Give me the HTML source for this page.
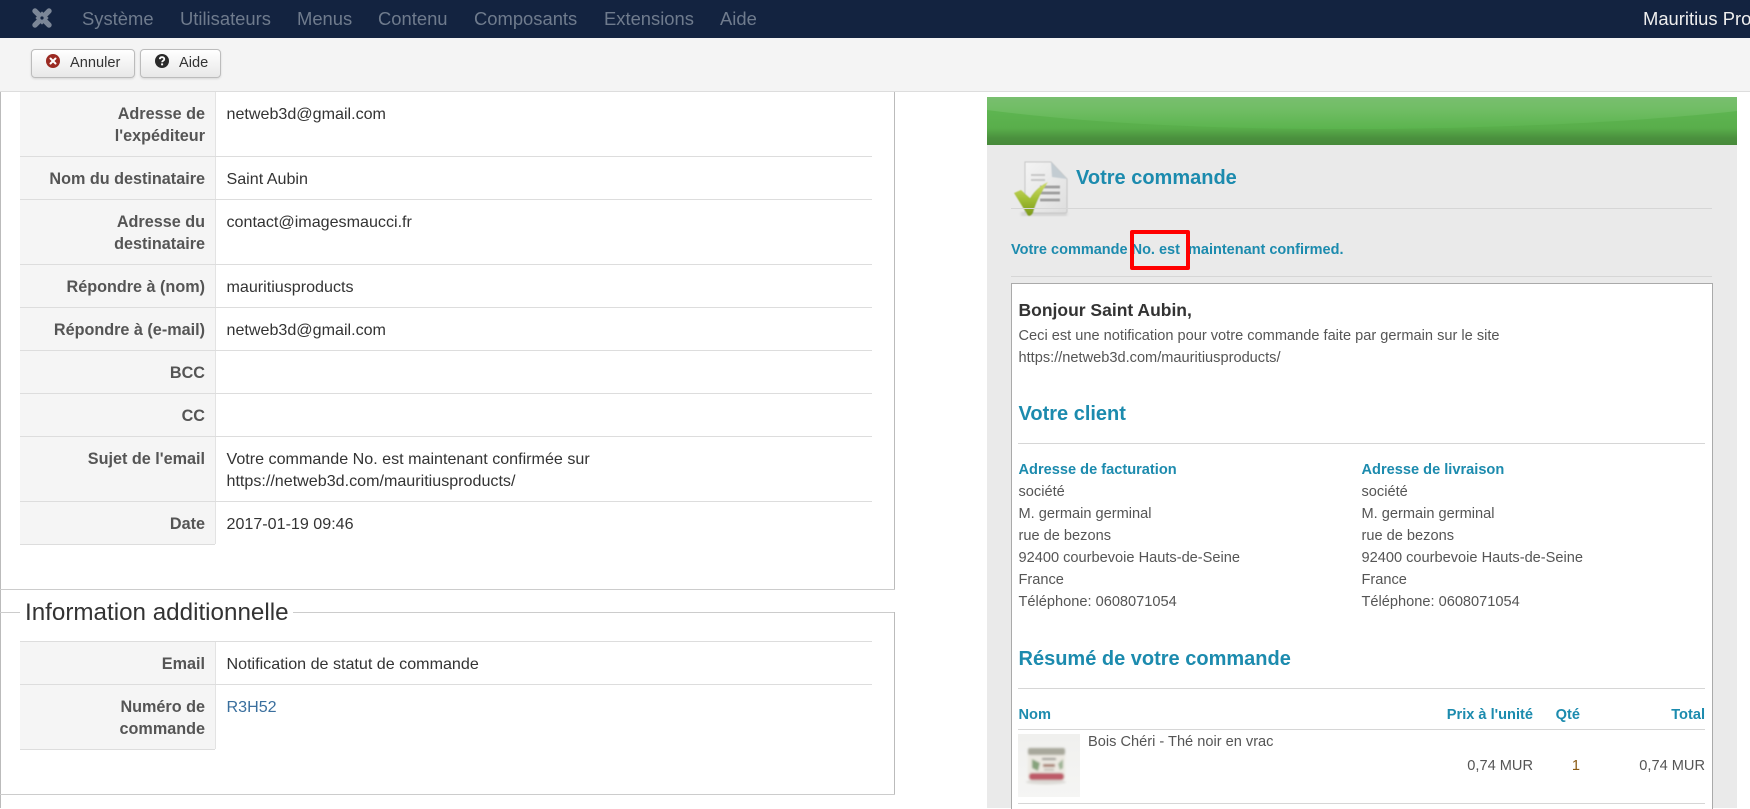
<!DOCTYPE html>
<html lang="fr"><head><meta charset="utf-8"><title>Email</title>
<style>
html,body{margin:0;padding:0;width:1750px;height:808px;overflow:hidden;background:#fff;font-family:"Liberation Sans",Arial,sans-serif;font-size:16.1px;color:#333}
.a{position:absolute;white-space:nowrap;line-height:22px}
.b{position:absolute}
.n{top:8px;font-size:18.4px;color:#6f7b8d}
.l{left:20px;width:185px;text-align:right;font-weight:bold;color:#555;background:none;font-size:16.2px}
.v{left:226.5px;color:#333}
.lb{position:absolute;left:20px;width:195px;background:#f5f5f5;border-right:1px solid #e3e3e3}
.ln{position:absolute;left:20px;width:852px;height:1px;background:#ddd}
.h{position:absolute;height:1px;background:#d6d6d6}
.t{color:#1c8bae;font-weight:bold}
.s{font-size:14.6px}
.g{color:#555;font-size:14.6px}
.btn{position:absolute;top:49px;height:27px;border:1px solid #bcbcbc;border-radius:4px;background:linear-gradient(#fff,#e8e8e8);box-shadow:0 1px 2px rgba(0,0,0,.12)}
</style></head><body>
<div class="b" style="left:0;top:0;width:1750px;height:38px;background:#132340"></div>
<svg class="b" style="left:29px;top:5px" width="26" height="26" viewBox="0 0 26 26">
<g fill="none" stroke="#7b8697" stroke-linecap="round"><path d="M6 6L20 20M20 6L6 20" stroke-width="5.4"/><path d="M8.5 13L13 8.5L17.5 13L13 17.5Z" stroke-width="3"/></g><circle cx="13" cy="13" r="1.6" fill="#132340"/></svg>
<div class="a n" style="left:82px">Système</div>
<div class="a n" style="left:180px">Utilisateurs</div>
<div class="a n" style="left:297px">Menus</div>
<div class="a n" style="left:378px">Contenu</div>
<div class="a n" style="left:474px">Composants</div>
<div class="a n" style="left:604px">Extensions</div>
<div class="a n" style="left:720px">Aide</div>
<div class="a" style="left:1643px;top:8px;font-size:18.4px;color:#eee">Mauritius Products</div>

<div class="b" style="left:0;top:38px;width:1750px;height:53px;background:#f4f4f4;border-bottom:1px solid #ddd"></div>
<div class="btn" style="left:31px;width:102px"></div>
<div class="btn" style="left:140px;width:79px"></div>
<svg class="b" style="left:45px;top:53px" width="16" height="16" viewBox="0 0 16 16"><circle cx="8" cy="8" r="7" fill="#9b2a22"/><path d="M5.5 5.5L10.5 10.5M10.5 5.5L5.5 10.5" stroke="#fff" stroke-width="2" stroke-linecap="round"/></svg>
<div class="a" style="left:70px;top:52px;font-size:14.6px;color:#333">Annuler</div>
<svg class="b" style="left:154px;top:53px" width="16" height="16" viewBox="0 0 16 16"><circle cx="8" cy="8" r="7" fill="#2a2a2a"/><path d="M5.8 6.2C5.9 4.8 6.9 4.2 8 4.2C9.3 4.2 10.3 5 10.3 6.1C10.3 7.6 8.1 7.6 8.1 9.3" fill="none" stroke="#fff" stroke-width="1.8"/><rect x="7.1" y="10.4" width="2" height="1.9" fill="#fff"/></svg>
<div class="a" style="left:179px;top:52px;font-size:14.6px;color:#333">Aide</div>

<!-- left panel -->
<div class="b" style="left:0;top:92px;width:1px;height:716px;background:#bbb"></div>
<div class="b" style="left:894px;top:92px;width:1px;height:498px;background:#bbb"></div>
<div class="b" style="left:0;top:589px;width:895px;height:1px;background:#ccc"></div>

<div class="lb" style="top:92px;height:452px"></div>
<div class="ln" style="top:156px"></div>
<div class="ln" style="top:199px"></div>
<div class="ln" style="top:264px"></div>
<div class="ln" style="top:307px"></div>
<div class="ln" style="top:350px"></div>
<div class="ln" style="top:393px"></div>
<div class="ln" style="top:436px"></div>
<div class="ln" style="top:501px"></div>
<div class="ln" style="top:544px;width:195px"></div>

<div class="a l" style="top:103px">Adresse de<br>l'expéditeur</div>
<div class="a v" style="top:103px">netweb3d@gmail.com</div>
<div class="a l" style="top:168px">Nom du destinataire</div>
<div class="a v" style="top:168px">Saint Aubin</div>
<div class="a l" style="top:211px">Adresse du<br>destinataire</div>
<div class="a v" style="top:211px">contact@imagesmaucci.fr</div>
<div class="a l" style="top:276px">Répondre à (nom)</div>
<div class="a v" style="top:276px">mauritiusproducts</div>
<div class="a l" style="top:319px">Répondre à (e-mail)</div>
<div class="a v" style="top:319px">netweb3d@gmail.com</div>
<div class="a l" style="top:362px">BCC</div>
<div class="a l" style="top:405px">CC</div>
<div class="a l" style="top:448px">Sujet de l'email</div>
<div class="a v" style="top:448px">Votre commande No. est maintenant confirmée sur<br>https://netweb3d.com/mauritiusproducts/</div>
<div class="a l" style="top:513px">Date</div>
<div class="a v" style="top:513px">2017-01-19 09:46</div>

<div class="b" style="left:0;top:612px;width:20px;height:1px;background:#ccc"></div>
<div class="b" style="left:293px;top:612px;width:602px;height:1px;background:#ccc"></div>
<div class="b" style="left:894px;top:612px;width:1px;height:183px;background:#bbb"></div>
<div class="a" style="left:25px;top:601px;font-size:24.2px;line-height:24px;color:#333">Information additionnelle</div>
<div class="lb" style="top:641px;height:108px"></div>
<div class="ln" style="top:641px"></div>
<div class="ln" style="top:684px"></div>
<div class="ln" style="top:749px;width:195px"></div>
<div class="a l" style="top:653px">Email</div>
<div class="a v" style="top:653px">Notification de statut de commande</div>
<div class="a l" style="top:696px">Numéro de<br>commande</div>
<div class="a v" style="top:696px;color:#3a6f9e">R3H52</div>
<div class="b" style="left:0;top:794px;width:895px;height:1px;background:#ccc"></div>

<!-- right email -->
<div class="b" style="left:987px;top:145px;width:750px;height:663px;background:#eaeaea"></div>
<svg class="b" style="left:987px;top:97px" width="750" height="48" viewBox="0 0 750 48" preserveAspectRatio="none">
<defs><linearGradient id="g1" x1="0" y1="0" x2="0" y2="1"><stop offset="0" stop-color="#62b854"/><stop offset=".27" stop-color="#5eb551"/><stop offset=".65" stop-color="#59ae4b"/><stop offset=".85" stop-color="#4b913e"/><stop offset="1" stop-color="#478a3a"/></linearGradient>
<linearGradient id="g2" x1="0" y1="0" x2="0" y2="1"><stop offset="0" stop-color="#79bf6f"/><stop offset=".4" stop-color="#70bd64"/><stop offset="1" stop-color="#5bb44e"/></linearGradient></defs>
<rect width="750" height="48" fill="url(#g1)"/>
<path d="M0 0H750V14C640 26 490 32 360 32C220 32 100 26 0 13Z" fill="url(#g2)"/></svg>

<svg class="b" style="left:1011px;top:160px" width="62" height="60" viewBox="0 0 62 60">
<defs><linearGradient id="p" x1="0" y1="0" x2="1" y2="1"><stop offset="0" stop-color="#f4f4f4"/><stop offset="1" stop-color="#dedede"/></linearGradient>
<linearGradient id="c" x1="0" y1="0" x2="0" y2="1"><stop offset="0" stop-color="#d0dc6c"/><stop offset=".5" stop-color="#a3bf35"/><stop offset="1" stop-color="#7c9a1a"/></linearGradient>
<filter id="so"><feGaussianBlur stdDeviation=".5"/></filter><filter id="sh"><feGaussianBlur stdDeviation="1.4"/></filter></defs>
<rect x="10" y="52" width="46" height="4" fill="#bbb" opacity=".5" filter="url(#sh)"/>
<g filter="url(#so)">
<path d="M14 2H40L56 19V51Q56 53 54 53H16Q14 53 14 51Z" fill="url(#p)" stroke="#c4c4c4"/>
<path d="M40 2L41 17L56 19Z" fill="#c3ccd2"/>
<path d="M20 15H34M20 20H34" stroke="#c6c6c6" stroke-width="2"/>
<path d="M29 27H49M29 33H49M29 40H49" stroke="#9f9f9f" stroke-width="3"/>
<path d="M3 33L10 30L19 38C24 30 30 25 37 22C31 31 25 42 22 53Q18 58 16 54Z" fill="url(#c)"/>
</g>
</svg>
<div class="a t" style="left:1076px;top:166px;font-size:20px;line-height:24px">Votre commande</div>
<div class="h" style="left:1011px;top:208px;width:701px"></div>
<div class="a t" style="left:1011px;top:239px;font-size:14.5px">Votre commande No. est&nbsp; maintenant confirmed.</div>
<div class="b" style="left:1130px;top:230px;width:52px;height:32px;border:4px solid #f00;border-radius:2px"></div>
<div class="h" style="left:1011px;top:276px;width:701px"></div>

<div class="b" style="left:1011px;top:283px;width:700px;height:525px;background:#fff;border:1px solid #aaa;border-bottom:0"></div>
<div class="a" style="left:1018.5px;top:299px;font-size:17.5px;font-weight:bold;color:#333">Bonjour Saint Aubin,</div>
<div class="a g" style="left:1018.5px;top:325px">Ceci est une notification pour votre commande faite par germain sur le site<br>https://netweb3d.com/mauritiusproducts/</div>
<div class="a t" style="left:1018.5px;top:402px;font-size:20px;line-height:24px">Votre client</div>
<div class="h" style="left:1018px;top:443px;width:687px"></div>
<div class="a t s" style="left:1018.5px;top:459px">Adresse de facturation</div>
<div class="a g" style="left:1018.5px;top:481px">société<br>M. germain germinal<br>rue de bezons<br>92400 courbevoie Hauts-de-Seine<br>France<br>Téléphone: 0608071054</div>
<div class="a t s" style="left:1361.5px;top:459px">Adresse de livraison</div>
<div class="a g" style="left:1361.5px;top:481px">société<br>M. germain germinal<br>rue de bezons<br>92400 courbevoie Hauts-de-Seine<br>France<br>Téléphone: 0608071054</div>
<div class="a t" style="left:1018.5px;top:647px;font-size:20px;line-height:24px">Résumé de votre commande</div>
<div class="h" style="left:1018px;top:688px;width:687px"></div>
<div class="a t s" style="left:1018.5px;top:704px">Nom</div>
<div class="a t s" style="right:217px;top:704px">Prix à l'unité</div>
<div class="a t s" style="right:170px;top:704px">Qté</div>
<div class="a t s" style="right:45px;top:704px">Total</div>
<div class="h" style="left:1018px;top:729px;width:687px"></div>
<svg class="b" style="left:1018px;top:734px" width="62" height="63" viewBox="0 0 62 63">
<defs><filter id="bl"><feGaussianBlur stdDeviation="1"/></filter><linearGradient id="bg" x1="0" y1="0" x2="0" y2="1"><stop offset="0" stop-color="#f0f0ee"/><stop offset="1" stop-color="#f5f5f4"/></linearGradient></defs>
<rect width="62" height="63" fill="url(#bg)"/>
<g filter="url(#bl)">
<ellipse cx="28" cy="48" rx="20" ry="2.5" fill="#dcdad6"/>
<rect x="10" y="14" width="37" height="32" rx="3" fill="#ece9e2"/>
<rect x="10" y="14" width="37" height="7" rx="2" fill="#a8a89b"/>
<path d="M14 25L22 29L20 37L14 34Z" fill="#86a37c"/><path d="M45 25L40 30L42 36L45 34Z" fill="#9db394"/>
<rect x="24" y="24" width="14" height="2" fill="#8f8f88"/><rect x="25" y="30" width="12" height="3" fill="#a67c6c"/><rect x="26" y="35" width="10" height="1.5" fill="#b5b0a8"/>
<rect x="11" y="39" width="35" height="7" rx="3" fill="#bd5a68"/>
</g></svg>
<div class="a g" style="left:1088px;top:731px">Bois Chéri - Thé noir en vrac</div>
<div class="a g" style="right:217px;top:755px">0,74 MUR</div>
<div class="a g" style="right:170px;top:755px;color:#8a5a14">1</div>
<div class="a g" style="right:45px;top:755px">0,74 MUR</div>
<div class="h" style="left:1018px;top:803px;width:687px"></div>
</body></html>
